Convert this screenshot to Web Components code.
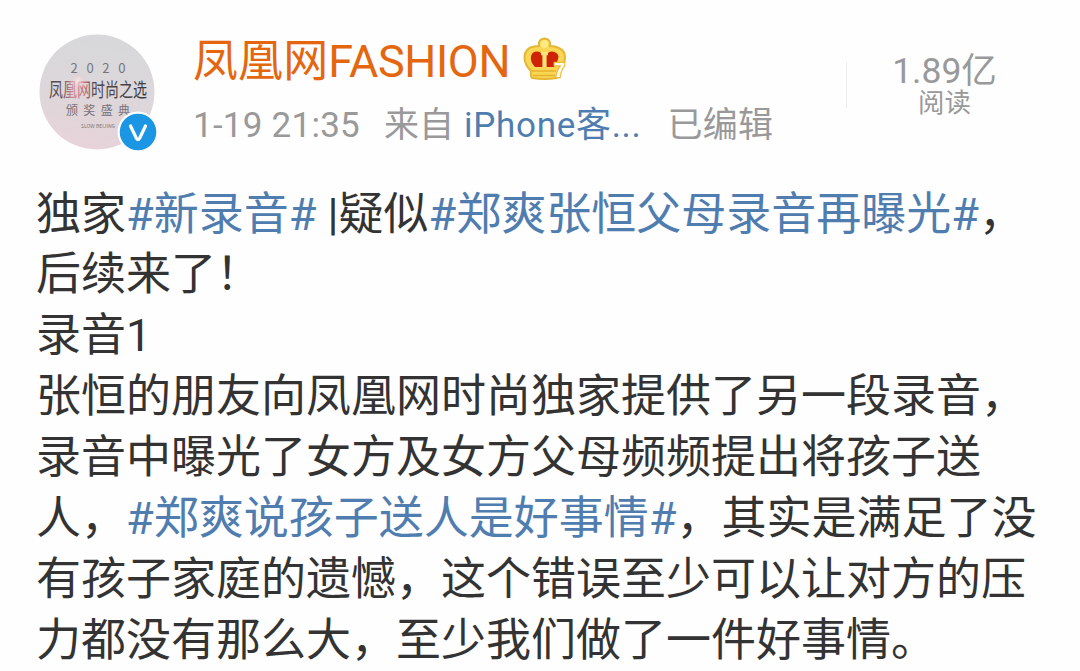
<!DOCTYPE html>
<html lang="zh-CN">
<head>
<meta charset="UTF-8">
<title>凤凰网FASHION</title>
<style>
body {
  margin: 0;
  background: #fefefe;
  font-family: Roboto, "Noto Sans CJK SC", sans-serif;
  overflow: hidden;
}
</style>
</head>
<body>
<weibo-post>
  <post-header slot="header">
    <user-avatar slot="avatar"></user-avatar>
    <span slot="name">凤凰网</span>
    <span slot="name-latin">FASHION</span>
    <member-crown slot="crown"></member-crown>
    <span slot="time">1-19 21:35</span>
    <span slot="from">来自</span>
    <span slot="source">iPhone客...</span>
    <span slot="edited">已编辑</span>
    <read-count slot="reads">1.89亿<span slot="label">阅读</span></read-count>
  </post-header>
  <post-line>独家<topic-link>#新录音#</topic-link> |疑似<topic-link>#郑爽张恒父母录音再曝光#</topic-link>，</post-line>
  <post-line>后续来了！</post-line>
  <post-line>录音1</post-line>
  <post-line>张恒的朋友向凤凰网时尚独家提供了另一段录音，</post-line>
  <post-line>录音中曝光了女方及女方父母频频提出将孩子送</post-line>
  <post-line>人，<topic-link>#郑爽说孩子送人是好事情#</topic-link>，其实是满足了没</post-line>
  <post-line>有孩子家庭的遗憾，这个错误至少可以让对方的压</post-line>
  <post-line>力都没有那么大，至少我们做了一件好事情。</post-line>
</weibo-post>

<script>
// シャドウDOMを作成する共通の基底クラス
class BaseElement extends HTMLElement {
  constructor() {
    super();
    this.attachShadow({ mode: "open" });
    // 余分な空白が本文に混ざらないようにtrimする
    this.shadowRoot.innerHTML = this.constructor.html.trim();
  }
}

// 投稿全体
class WeiboPost extends BaseElement {
  static html = `
<style>
:host {
  display: block;
  box-sizing: border-box;
  width: 1080px;
  height: 671px;
  padding: 34px 0 0 36px;
  overflow: hidden;
}
.text {
  margin-top: 32.5px;
}
</style>
<slot name="header"></slot>
<div class="text"><slot></slot></div>`;
}

// ヘッダー(アバター、名前、日時、閲覧数)
class PostHeader extends BaseElement {
  static html = `
<style>
:host {
  display: flex;
  height: 118px;
}
.info {
  width: 653px;
  margin-left: 34px;
}
.name {
  display: flex;
  align-items: flex-start;
  height: 56px;
  color: #e4660f;
  font-size: 45px;
  line-height: 48px;
  white-space: nowrap;
}
.names {
  display: flex;
  align-items: baseline;
  padding-top: 4px;
}
.cjk { letter-spacing: 0.1px; }
.latin { letter-spacing: -0.4px; }
.crown { margin: 3px 0 0 13px; }
.meta {
  display: flex;
  align-items: baseline;
  height: 36px;
  margin-top: 18px;
  color: #999;
  font-size: 35px;
  line-height: 36px;
  white-space: nowrap;
}
.time { letter-spacing: 0.25px; }
.from { margin-left: 24px; }
.source { margin-left: 10px; color: #507daf; letter-spacing: 0.7px; }
.edited { margin-left: 26px; letter-spacing: 0.3px; }
</style>
<slot name="avatar"></slot>
<div class="info">
  <div class="name">
    <div class="names">
      <div class="cjk"><slot name="name"></slot></div>
      <div class="latin"><slot name="name-latin"></slot></div>
    </div>
    <div class="crown"><slot name="crown"></slot></div>
  </div>
  <div class="meta">
    <div class="time"><slot name="time"></slot></div>
    <div class="from"><slot name="from"></slot></div>
    <div class="source"><slot name="source"></slot></div>
    <div class="edited"><slot name="edited"></slot></div>
  </div>
</div>
<slot name="reads"></slot>`;
}

// アバターと認証バッジ
class UserAvatar extends BaseElement {
  static html = `
<style>
:host {
  display: block;
  width: 122px;
  height: 118px;
  margin-left: 1px;
}
svg { display: block; }
text {
  font-family: "Noto Sans CJK SC", sans-serif;
  text-anchor: middle;
}
</style>
<svg width="122" height="118" viewBox="0 0 122 118">
  <defs>
    <linearGradient id="bg" x1="0.6" y1="0" x2="0.4" y2="1">
      <stop offset="0" stop-color="#d7d8da"/>
      <stop offset="0.5" stop-color="#dcd7da"/>
      <stop offset="1" stop-color="#e7d3d9"/>
    </linearGradient>
    <linearGradient id="ink" x1="0" x2="1">
      <stop offset="0" stop-color="#4b4448"/>
      <stop offset="0.15" stop-color="#685057"/>
      <stop offset="0.23" stop-color="#cf8791"/>
      <stop offset="0.38" stop-color="#bd6875"/>
      <stop offset="0.45" stop-color="#54474c"/>
      <stop offset="1" stop-color="#3c3b3e"/>
    </linearGradient>
    <radialGradient id="glow">
      <stop offset="0" stop-color="#fff1f2" stop-opacity="0.7"/>
      <stop offset="1" stop-color="#eab5be" stop-opacity="0"/>
    </radialGradient>
  </defs>
  <circle cx="60" cy="58" r="57.5" fill="url(#bg)"/>
  <text x="61" y="39" font-size="13" textLength="55" fill="#77757a">2020</text>
  <text transform="translate(61 62.5) scale(1 1.4)" font-size="14" fill="url(#ink)">凤凰网时尚之选</text>
  <circle cx="41" cy="47" r="9" fill="url(#glow)"/>
  <text x="61" y="81" font-size="12" textLength="64" fill="#77717a">颁奖盛典</text>
  <text x="61" y="94" font-size="5" textLength="34" fill="#777">SLOW BEIJING</text>
  <circle cx="101" cy="98" r="20.5" fill="#fefefe"/>
  <circle cx="101" cy="98" r="18.3" fill="#1b96e5"/>
  <path d="M93.500 92 L99.500 104.500 Q101 107 102.500 104.500 L108.500 92" fill="none" stroke="#fff" stroke-width="3.2" stroke-linecap="round"/>
</svg>`;
}

// 会員レベルの王冠
class MemberCrown extends BaseElement {
  static html = `
<style>
:host { display: block; width: 44px; height: 44px; }
svg { display: block; }
text { font-family: "Liberation Sans", sans-serif; font-weight: bold; font-size: 20px; }
</style>
<svg width="44" height="44" viewBox="0 0 44 44">
  <path d="M9 41 Q7.500 40 8 34 Q1.500 28 1.500 20 Q2 11 11 9.500 Q14 9 16 9 Q15 2 21.500 1.500 Q28 2 27 9 L32 9.500 Q42 12 42 20 Q42 28 35 34 Q36 40 34 41 Q21.500 43 9 41 Z" fill="#f9d653" stroke="#e3b734" stroke-width="2"/>
  <circle cx="21.500" cy="7" r="4" fill="#ffe982"/>
  <path d="M12 30 Q7 25 8 19.500 Q9 14.500 14 14.500 Q18 14.500 19.500 18 V30 Z M23.500 30 V18 Q25 14.500 29 14.500 Q35 15 35.500 20 Q35 25 31 30 Z" fill="#cf2308"/>
  <path d="M18 16.500 H25 M21.500 16 V30" stroke="#ffe47b" stroke-width="3.500"/>
  <path d="M9 34 H33 M10 38.500 H32" stroke="#e2b330" stroke-width="1.300"/>
  <text x="31" y="40" fill="#fffdf0" stroke="#edbd35" stroke-width="2.500" paint-order="stroke">7</text>
</svg>`;
}

// 閲覧数
class ReadCount extends BaseElement {
  static html = `
<style>
:host {
  display: flex;
  align-items: center;
  width: 196px;
  height: 64px;
  margin-top: 19px;
  color: #999;
  white-space: nowrap;
}
.line { width: 1px; height: 46px; background: #ececec; }
.box { flex: 1; text-align: center; }
.num { font-size: 35.5px; line-height: 35px; }
.label { font-size: 26.4px; line-height: 28px; }
</style>
<div class="line"></div>
<div class="box">
  <div class="num"><slot></slot></div>
  <div class="label"><slot name="label"></slot></div>
</div>`;
}

// 本文の1行
class PostLine extends BaseElement {
  static html = `
<style>
:host {
  display: block;
  height: 60.9px;
  line-height: 60.9px;
  font-size: 45px;
  color: #333;
  white-space: nowrap;
}
</style>
<slot></slot>`;
}

// トピックのリンク
class TopicLink extends BaseElement {
  static html = `
<style>
:host { display: inline; color: #507daf; }
</style><slot></slot>`;
}

customElements.define("weibo-post", WeiboPost);
customElements.define("post-header", PostHeader);
customElements.define("user-avatar", UserAvatar);
customElements.define("member-crown", MemberCrown);
customElements.define("read-count", ReadCount);
customElements.define("post-line", PostLine);
customElements.define("topic-link", TopicLink);
</script>
</body>
</html>
